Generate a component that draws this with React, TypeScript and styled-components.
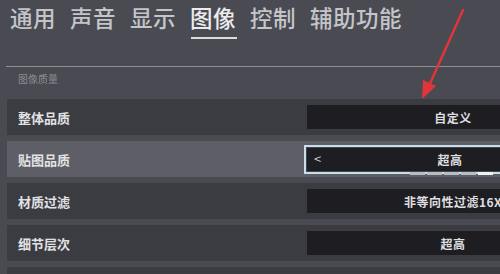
import React from "react";
import styled, { createGlobalStyle } from "styled-components";

const Global = createGlobalStyle`
  html, body { margin: 0; padding: 0; background: #4a4b52; }
  body { width: 500px; height: 274px; overflow: hidden; font-family: "Noto Sans CJK SC", "Noto Sans", sans-serif; }
`;

const Page = styled.div`
  position: relative;
  width: 500px;
  height: 274px;
  overflow: hidden;
  background: #4a4b52;
`;

const Tabs = styled.nav`
  display: flex;
  gap: 14px;
  padding: 2px 0 0 10px;
  height: 36px;
`;

const Tab = styled.div<{ $active?: boolean }>`
  font-size: 22.5px;
  font-weight: 500;
  line-height: 30px;
  letter-spacing: 0.5px;
  color: ${(p) => (p.$active ? "#ececee" : "#c4c5c9")};
  position: relative;
  height: 36px;
  &::after {
    content: "";
    display: ${(p) => (p.$active ? "block" : "none")};
    position: absolute;
    left: 1px;
    right: -1px;
    bottom: -1px;
    height: 2px;
    background: #dcdcde;
  }
`;

const Divider = styled.div`
  margin: 28px 0 0 6px;
  height: 1px;
  background: #8d8e94;
`;

const SectionLabel = styled.div`
  font-size: 10px;
  line-height: 14px;
  color: #8c8d93;
  padding: 5px 0 0 18px;
  height: 26px;
  filter: blur(0.4px);
`;

const List = styled.div`
  display: flex;
  flex-direction: column;
  gap: 6px;
  margin-left: 7px;
  margin-top: 1px;
`;

const Row = styled.div<{ $focus?: boolean }>`
  display: flex;
  align-items: center;
  height: 36px;
  background: ${(p) => (p.$focus ? "#5e5f66" : "#3b3c42")};
  position: relative;
`;

const Label = styled.div`
  flex: none;
  width: 297px;
  padding-left: 11px;
  box-sizing: border-box;
  font-size: 13px;
  font-weight: 700;
  color: #e2e2e4;
`;

const ValueBox = styled.div<{ $focus?: boolean }>`
  position: relative;
  flex: none;
  width: 292px;
  height: ${(p) => (p.$focus ? "29px" : "24px")};
  margin-left: ${(p) => (p.$focus ? "0px" : "3px")};
  box-sizing: border-box;
  background: #1e1d21;
  border: ${(p) => (p.$focus ? "2px solid #cbdde6" : "none")};
  box-shadow: ${(p) => (p.$focus ? "inset 0 0 0 1px #3b4a52" : "none")};
  display: flex;
  align-items: center;
  justify-content: center;
  font-size: 12px;
  font-weight: 700;
  color: #dedee0;
  letter-spacing: 0.5px;
`;

const Chevron = styled.span`
  position: absolute;
  left: 8px;
  top: 50%;
  transform: translateY(-55%);
  font-size: 13px;
  font-weight: 400;
  color: #c8c8cc;
`;

const Segments = styled.div`
  position: absolute;
  left: 104px;
  bottom: -3px;
  display: flex;
  gap: 2px;
`;

const Segment = styled.span<{ $on?: boolean }>`
  width: 15px;
  height: 3px;
  background: ${(p) => (p.$on ? "#f2f2f2" : "#b9bcc2")};
`;

const Arrow = styled.svg`
  position: absolute;
  left: 410px;
  top: 6px;
`;

const rows = [
  { label: "整体品质", value: "自定义" },
  { label: "贴图品质", value: "超高", focus: true },
  { label: "材质过滤", value: "非等向性过滤16X" },
  { label: "细节层次", value: "超高" },
  { label: "", value: "" },
];

export default function App() {
  return (
    <Page>
      <Global />
      <Tabs>
        <Tab>通用</Tab>
        <Tab>声音</Tab>
        <Tab>显示</Tab>
        <Tab $active>图像</Tab>
        <Tab>控制</Tab>
        <Tab>辅助功能</Tab>
      </Tabs>
      <Divider />
      <SectionLabel>图像质量</SectionLabel>
      <List>
        {rows.map((r, i) => (
          <Row key={i} $focus={r.focus}>
            <Label>{r.label}</Label>
            {r.label && (
              <ValueBox $focus={r.focus}>
                {r.focus && <Chevron>&lt;</Chevron>}
                {r.value}
                {r.focus && (
                  <Segments>
                    <Segment />
                    <Segment />
                    <Segment />
                    <Segment />
                    <Segment $on />
                  </Segments>
                )}
              </ValueBox>
            )}
          </Row>
        ))}
      </List>
      <Arrow width="70" height="100" viewBox="0 0 70 100">
        <line x1="53" y1="4" x2="18" y2="82" stroke="#e2343a" strokeWidth="2.4" strokeLinecap="round" />
        <polygon points="12,93 13,74 26,80" fill="#e2343a" />
      </Arrow>
    </Page>
  );
}
